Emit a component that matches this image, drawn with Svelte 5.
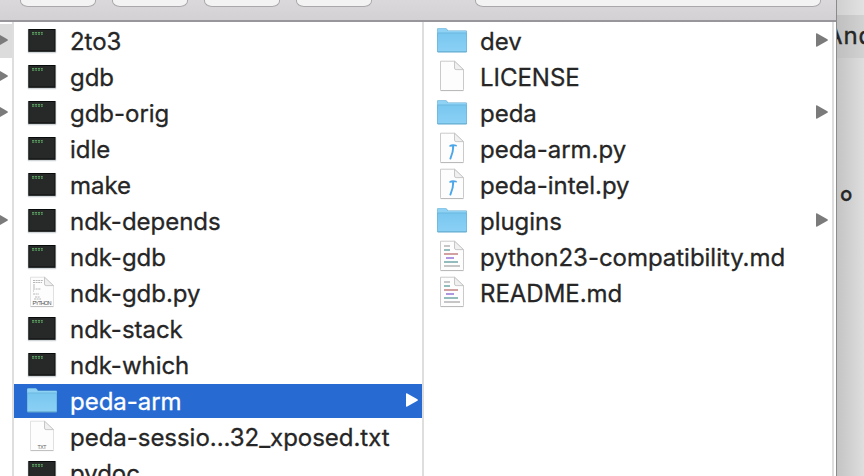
<script>
  const bin = [
    { name: '2to3', kind: 'exec' },
    { name: 'gdb', kind: 'exec' },
    { name: 'gdb-orig', kind: 'exec' },
    { name: 'idle', kind: 'exec' },
    { name: 'make', kind: 'exec' },
    { name: 'ndk-depends', kind: 'exec' },
    { name: 'ndk-gdb', kind: 'exec' },
    { name: 'ndk-gdb.py', kind: 'python' },
    { name: 'ndk-stack', kind: 'exec' },
    { name: 'ndk-which', kind: 'exec' },
    { name: 'peda-arm', kind: 'folder', selected: true, children: true },
    { name: 'peda-sessio...32_xposed.txt', kind: 'txt' },
    { name: 'pydoc', kind: 'exec' }
  ];
  const peda = [
    { name: 'dev', kind: 'folder', children: true },
    { name: 'LICENSE', kind: 'blank' },
    { name: 'peda', kind: 'folder', children: true },
    { name: 'peda-arm.py', kind: 'hammer' },
    { name: 'peda-intel.py', kind: 'hammer' },
    { name: 'plugins', kind: 'folder', children: true },
    { name: 'python23-compatibility.md', kind: 'code' },
    { name: 'README.md', kind: 'code' }
  ];
  const parents = [true, true, true, false, false, true];
</script>

{#snippet arrow()}
  <svg class="arrow" width="12" height="14" viewBox="0 0 12 14"><path d="M.8.2 11.4 6.2Q12.4 7 11.4 7.8L.8 13.8Q0 14 0 13V1Q0 0 .8.2Z" /></svg>
{/snippet}

{#snippet icon(kind)}
  <svg class="icon" width="32" height="32" viewBox="0 0 32 32">
    {#if kind === 'exec'}
      <rect x="1.7" y="5" width="28.6" height="24.2" rx="1" fill="#b9c0c4" opacity=".65" />
      <rect x="2.3" y="5" width="27.2" height="22.8" fill="#080b0b" />
      <rect x="3.2" y="6" width="25.4" height="20.6" fill="#272828" />
      <path d="M6 8.8h2.3M9 8.8h2.2M12 8.8h2M14.8 8.8h2" stroke="#6cbf70" stroke-width="1.1" />
      <path d="M6 10.2h2.3M9.3 10.2h1.8M12 10.2h2M15 10.2h1.8" stroke="#5aa35f" stroke-width="1.1" />
    {:else if kind === 'folder'}
      <path d="M1 27V5.3Q1 4.2 2 4.2H9.5Q10.5 4.2 11.2 5.2L12 6.4H30Q31 6.4 31 7.5V27.4Q31 28.4 30 28.4H2Q1 28.4 1 27Z" fill="#62a9cf" />
      <path d="M1.3 9V5.5Q1.3 4.6 2.2 4.6H9.3Q10.2 4.6 10.8 5.4L11.8 6.9H30Q30.7 6.9 30.7 7.8V9Z" fill="#90d2f4" />
      <rect x="1.5" y="8.6" width="29" height="18.7" fill="url(#folderFill)" />
      <path d="M1.2 9H30.8" stroke="#69b5dc" stroke-width=".7" />
    {:else}
      <path d="M4.5 1.2H18.5L27.5 9.8V29.7Q27.5 30.5 26.7 30.5H5.3Q4.5 30.5 4.5 29.7Z" fill="#fdfdfd" stroke={kind === 'python' || kind === 'txt' ? '#dedede' : '#c4c4c4'} stroke-width=".9" />
      <path d="M4.5 30.6H27.5" stroke="#b4b4b4" stroke-width=".8" />
      <path d="M18.5 1.2V8Q18.5 9.6 20.2 9.6H27.5Z" fill="#f0f0f0" stroke="#c2c2c2" stroke-width=".9" />
      {#if kind === 'hammer'}
        <path d="M13.4 13.3Q16.5 11.5 20.8 13V14.6L17.8 14.1L17.4 16L16.2 15.7L16.5 14.6L13.4 14.8Z" fill="#4ba5e8" />
        <path d="M17.3 14.3Q17.3 20 14.4 26.6" fill="none" stroke="#4ba5e8" stroke-width="1.9" stroke-linecap="round" />
      {:else if kind === 'code'}
        <path d="M8 6H14M8 26H24" stroke="#b4b4b4" stroke-width="1.7" />
        <path d="M8 10H14M8 22H22" stroke="#72a6a7" stroke-width="1.7" />
        <path d="M8 14H22" stroke="#ca8f91" stroke-width="1.7" />
        <path d="M10 18H18" stroke="#a184dc" stroke-width="1.7" />
      {:else if kind === 'python'}
        <path d="M7 4.5H17M7 6.5H16M7 9H9M7 11H9M7 13H15M7 15H8M7 18H13M9 21H14M8 23H15" stroke="#b0b0b0" stroke-width=".9" stroke-dasharray="2 .6" />
        <text x="6.5" y="28.8" font-size="5.6" textLength="19" fill="#555">PYTHON</text>
      {:else if kind === 'txt'}
        <text x="11.5" y="29" font-size="5.2" textLength="9" fill="#666">TXT</text>
      {/if}
    {/if}
  </svg>
{/snippet}

{#snippet list(items)}
  <ul>
    {#each items as item}
      <li class:selected={item.selected}>
        {@render icon(item.kind)}
        <span class="name">{item.name}</span>
        {#if item.children}{@render arrow()}{/if}
      </li>
    {/each}
  </ul>
{/snippet}

<svg class="defs" width="0" height="0"><defs><linearGradient id="folderFill" x2="0" y2="1"><stop stop-color="#78c6ef" /><stop offset="1" stop-color="#8bd0f5" /></linearGradient></defs></svg>

<div class="desktop">
  <main class="window">
    <header>
      <i class="stub"></i><i></i><i></i><i></i><i></i><i class="search"></i>
    </header>
    <div class="columns">
      <section class="parents">
        <ul>
          {#each parents as hasChildren, i}
            <li class:current={i === 0}>{#if hasChildren}{@render arrow()}{/if}</li>
          {/each}
        </ul>
      </section>
      <section class="bin">{@render list(bin)}</section>
      <section class="peda">{@render list(peda)}</section>
    </div>
  </main>
  <aside>
    <div class="top"></div>
    <div class="band"><span>And</span></div>
    <div class="note"><i></i><p>。</p></div>
  </aside>
</div>

<style>
  :global(body) { margin: 0; overflow: hidden; }
  .defs { position: absolute; }
  .desktop { display: flex; width: 864px; height: 476px; overflow: hidden; font-family: Inter, "Liberation Sans", sans-serif; color: #262626; }
  .window { width: 836px; flex: none; border-right: 1px solid #8b8b8b; background: #fff; }
  header { display: flex; gap: 16px; height: 20px; box-sizing: border-box; background: linear-gradient(#dad8da, #d3d1d3); align-items: flex-start; }
  header i { flex: none; box-sizing: border-box; width: 76px; height: 6.6px; border: 1px solid #aaa8aa; border-top: 0; border-radius: 0 0 8px 8px / 0 0 6px 6px; background: #f3f3f3; }
  header .stub { width: 4px; border: 0; background: none; }
  header .search { width: 346px; margin-left: 87px; }
  .columns { display: flex; height: 456px; box-sizing: border-box; border-top: 2px solid #98969a; overflow: hidden; }
  section { flex: none; box-sizing: border-box; border-right: 2px solid #dedede; overflow: hidden; }
  .parents { width: 14px; }
  .bin { width: 410px; }
  .peda { width: 410px; }
  ul { list-style: none; margin: 0; padding: 2px 0 0; display: flex; flex-direction: column; gap: 2px; }
  li { display: flex; box-sizing: border-box; height: 34px; padding: 0 6px 0 12px; align-items: flex-start; flex: none; }
  .parents li { padding: 0 4px 0 0; justify-content: flex-end; }
  .parents .current { background: #dcdcdc; }
  .selected { background: #276bd2; color: #fff; }
  .icon { flex: none; font-family: "Liberation Sans", sans-serif; }
  .name { margin-left: 12px; font-size: 24px; line-height: 36px; letter-spacing: -.03px; white-space: nowrap; -webkit-text-stroke: .3px currentColor; }
  .arrow { flex: none; margin: 9px -2px 0 auto; fill: #7b7b7b; }
  .parents .arrow { margin-right: 0; }
  .selected .arrow { fill: #fff; }
  aside { flex: 1; min-width: 0; display: flex; flex-direction: column; overflow: hidden; background: linear-gradient(90deg, #c4c4c4, #dedede); }
  .top { height: 15px; flex: none; background: linear-gradient(90deg, #d0d0d0, #e2e2e2); }
  .band { height: 43px; flex: none; background: linear-gradient(90deg, #bfbfbf, #d2d2d2); font-size: 24px; line-height: 42px; -webkit-text-stroke: .4px currentColor; }
  .band span { display: block; margin-left: -11px; letter-spacing: .9px; }
  .note { display: flex; align-items: flex-start; margin-top: 108px; }
  .note i { width: 1px; height: 3px; margin-top: 16px; background: #262626; }
  .note p { margin: 0 0 0 3px; font: 500 32px/36px "Noto Sans CJK SC", sans-serif; -webkit-text-stroke: .5px currentColor; }
</style>
